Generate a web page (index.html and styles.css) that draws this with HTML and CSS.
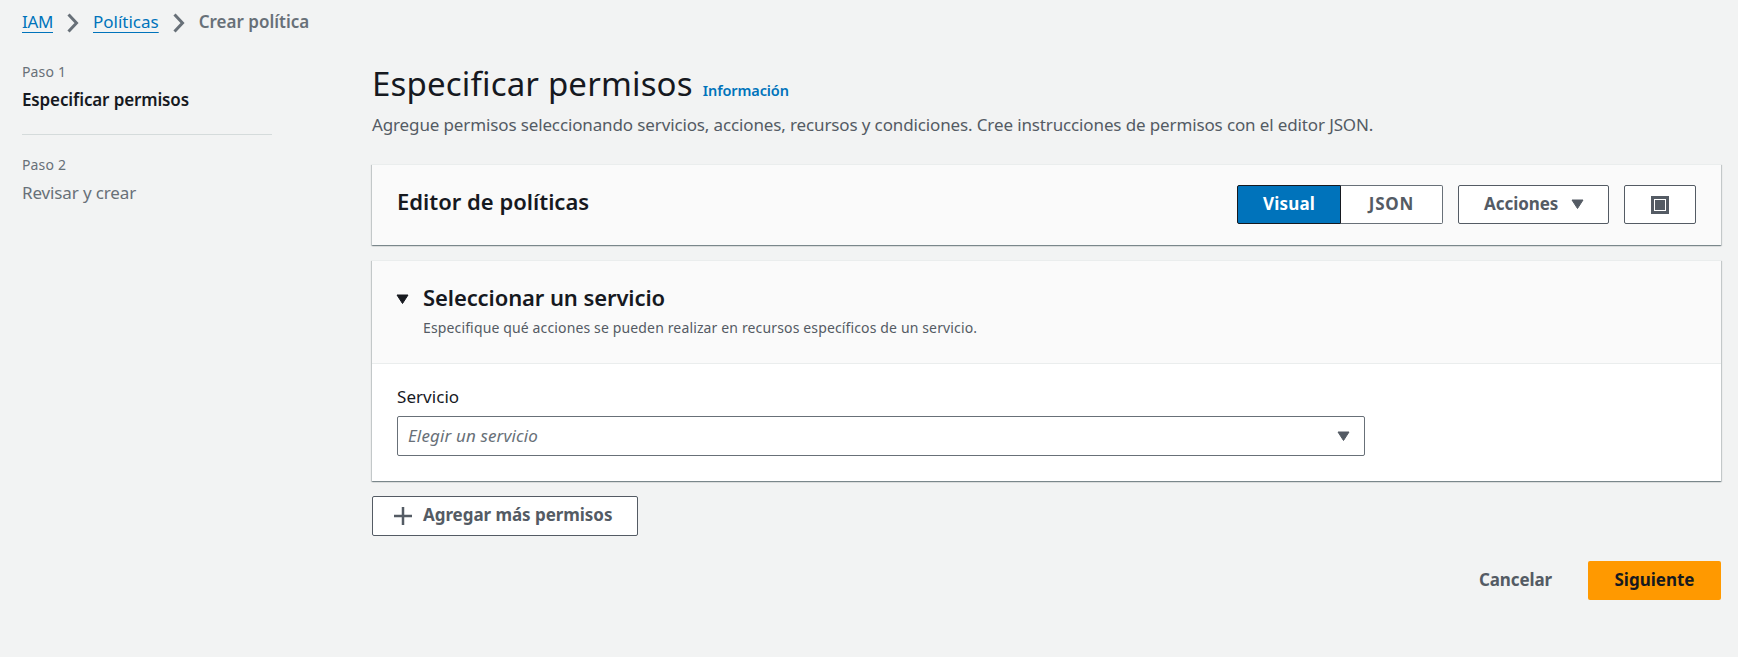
FILE: index.html
```html
<!DOCTYPE html>
<html lang="es">
<head>
<meta charset="utf-8">
<title>Crear política | IAM</title>
<link rel="stylesheet" href="styles.css">
</head>
<body>
<nav class="breadcrumb">
  <a class="crumb-link crumb-root" href="#">IAM</a>
  <svg class="crumb-sep" width="12" height="20" viewBox="0 0 12 20"><path d="M1.500 1.500 9.500 10 1.500 18.500"/></svg>
  <a class="crumb-link" href="#">Políticas</a>
  <svg class="crumb-sep" width="12" height="20" viewBox="0 0 12 20"><path d="M1.500 1.500 9.500 10 1.500 18.500"/></svg>
  <span class="crumb-current">Crear política</span>
</nav>
<div class="layout">
  <aside class="steps">
    <div class="step step-active">
      <div class="step-number">Paso 1</div>
      <div class="step-name">Especificar permisos</div>
    </div>
    <div class="step">
      <div class="step-number">Paso 2</div>
      <div class="step-name">Revisar y crear</div>
    </div>
  </aside>
  <main class="main">
    <div class="title-row">
      <h1 class="title">Especificar permisos</h1>
      <a class="info" href="#">Información</a>
    </div>
    <p class="description">Agregue permisos seleccionando servicios, acciones, recursos y condiciones. Cree instrucciones de permisos con el editor JSON.</p>

    <section class="panel editor">
      <h2 class="heading editor-heading">Editor de políticas</h2>
      <div class="segments">
        <button class="segment segment-on">Visual</button>
        <button class="segment segment-json">JSON</button>
      </div>
      <button class="btn btn-actions"><span>Acciones</span><svg width="13" height="11" viewBox="0 0 13 11"><path class="caret" d="M1 1h11L6.500 9.500z"/></svg></button>
      <button class="btn btn-icon"><svg width="18" height="18" viewBox="0 0 18 18"><path class="frame" d="M1.500 1.500h15v15h-15z"/><path class="core" d="M4 4h10v10H4z"/></svg></button>
    </section>

    <section class="panel">
      <header class="service-header">
        <svg class="service-caret" width="13" height="11" viewBox="0 0 13 11"><path class="caret" d="M1 1h11L6.500 9.500z"/></svg>
        <div>
          <h2 class="heading service-heading">Seleccionar un servicio</h2>
          <p class="service-sub">Especifique qué acciones se pueden realizar en recursos específicos de un servicio.</p>
        </div>
      </header>
      <div class="service-body">
        <div class="label">Servicio</div>
        <div class="select">
          <span class="placeholder">Elegir un servicio</span>
          <svg width="13" height="11" viewBox="0 0 13 11"><path class="caret" d="M1 1h11L6.500 9.500z"/></svg>
        </div>
      </div>
    </section>

    <button class="btn btn-add"><svg width="18" height="18" viewBox="0 0 18 18"><path class="plus" d="M9 0v18M0 9h18"/></svg><span>Agregar más permisos</span></button>

    <footer class="footer">
      <button class="cancel">Cancelar</button>
      <button class="next">Siguiente</button>
    </footer>
  </main>
</div>
</body>
</html>
```

FILE: styles.css
```css
* { box-sizing: border-box; }
body {
  margin: 0;
  min-height: 657px;
  background: #f2f3f3;
  color: #16191f;
  font: 17px/28px "Noto Sans", "Open Sans", sans-serif;
}
h1, h2, p { margin: 0; }
button { font: inherit; padding: 0; }
svg { display: block; flex: none; }

.breadcrumb {
  display: flex;
  align-items: center;
  height: 35px;
  padding: 9px 0 0 22px;
  line-height: 26px;
}
.crumb-link {
  color: #0073bb;
  text-decoration: underline;
  text-decoration-thickness: 1px;
  text-underline-offset: 4px;
  text-decoration-skip-ink: none;
}
.crumb-root { letter-spacing: -0.35px; }
.crumb-sep { margin: 2px 14px 0 14px; fill: none; stroke: #687078; stroke-width: 3; }
.crumb-current { color: #687078; font-weight: 600; letter-spacing: 0; }

.layout { display: flex; padding: 26px 17px 0 22px; }
.steps { width: 250px; margin: 1px 100px 0 0; flex: none; color: #687078; }
.step + .step { margin-top: 20px; padding-top: 20px; border-top: 1px solid #d5dbdb; }
.step-number { font-size: 14px; line-height: 20px; letter-spacing: 0.15px; }
.step-name { margin-top: 4px; letter-spacing: -0.13px; }
.step-active .step-name { color: #16191f; font-weight: 600; }

.main { flex: 1; min-width: 0; padding-top: 1px; }
.title-row { display: flex; align-items: baseline; gap: 10px; height: 44px; }
.title { font-size: 33px; font-weight: 400; line-height: 44px; letter-spacing: 0.17px; }
.info { color: #0073bb; font-size: 14.5px; font-weight: 600; letter-spacing: -0.1px; line-height: 20px; text-decoration: none; }
.description { margin: 5px 0 25px; color: #545b64; letter-spacing: -0.13px; white-space: nowrap; }

.panel {
  background: #fff;
  border-top: 1px solid #eaeded;
  box-shadow: 0 1px 1px 0 rgba(0, 28, 36, .3), 1px 1px 1px 0 rgba(0, 28, 36, .15), -1px 1px 1px 0 rgba(0, 28, 36, .15);
  margin-bottom: 16px;
}
.heading { font-size: 22px; font-weight: 600; line-height: 30px; }
.editor { display: flex; height: 81px; padding: 20px 25px 0; background: #fafafa; }
.editor-heading { flex: 1; padding-top: 1px; }
.segments { display: flex; height: 39px; margin-right: 15px; }
.segment { padding-bottom: 2px; border: 1px solid #687078; background: #fff; color: #545b64; font-weight: 700; line-height: 34px; }
.segment-on { width: 104px; border-color: #16191f; border-radius: 2px 0 0 2px; background: #0073bb; color: #fff; letter-spacing: 0.15px; }
.segment-json { width: 102px; border-left: 0; border-radius: 0 2px 2px 0; letter-spacing: 0.8px; }

.btn {
  display: flex;
  align-items: center;
  border: 1px solid #545b64;
  border-radius: 2px;
  background: #fff;
  color: #545b64;
  font-weight: 700;
}
.btn span { padding-bottom: 2px; }
.caret { fill: currentColor; stroke: currentColor; stroke-linejoin: round; }
.btn-actions { width: 151px; height: 39px; margin-right: 15px; padding-left: 25px; gap: 13px; letter-spacing: -0.05px; }
.btn-icon { width: 72px; height: 39px; justify-content: center; }
.frame { fill: none; stroke: #545b64; stroke-width: 3; }
.core { fill: #545b64; }

.editor + .panel { margin-top: -1px; }
.service-header { display: flex; gap: 14px; height: 103px; padding: 21px 25px 0 24px; background: #fafafa; border-bottom: 1px solid #eaeded; }
.service-caret { margin-top: 12px; }
.service-heading { letter-spacing: -0.1px; }
.service-sub { margin-top: 6px; color: #545b64; font-size: 14px; line-height: 20px; letter-spacing: 0.14px; }
.service-body { height: 117px; padding: 19px 25px 0; }
.label { margin-bottom: 5px; letter-spacing: 0.05px; }
.select { display: flex; align-items: center; justify-content: space-between; width: 968px; height: 40px; padding: 0 14px 0 10px; border: 1px solid #687078; border-radius: 2px; color: #545b64; }
.placeholder { color: #687078; font-style: italic; letter-spacing: 0.13px; }

.btn-add { width: 266px; height: 40px; margin-top: -1px; padding-left: 21px; gap: 11px; letter-spacing: -0.05px; }
.plus { fill: none; stroke: #545b64; stroke-width: 2.5; }
.footer { display: flex; justify-content: flex-end; gap: 36px; margin-top: 25px; }
.cancel { padding-bottom: 2px; border: 0; background: none; color: #545b64; font-weight: 700; letter-spacing: -0.1px; }
.next { width: 133px; height: 39px; padding-bottom: 2px; border: 0; border-radius: 2px; background: #ff9900; color: #16191f; font-weight: 700; }
```
